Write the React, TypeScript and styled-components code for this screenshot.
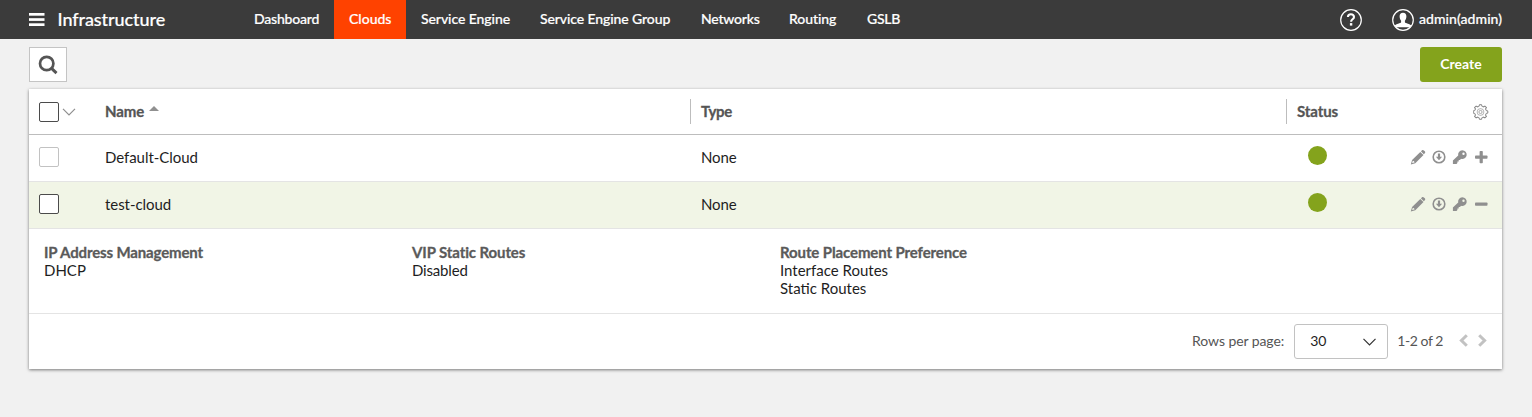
import React from "react";
import styled, { createGlobalStyle } from "styled-components";

const Global = createGlobalStyle`
  *, *::before, *::after { box-sizing: border-box; }
  html, body { margin: 0; background: #f1f1f1; }
  body { font-family: Lato, "Liberation Sans", sans-serif; font-size: 15px; color: #1e1e1e; overflow: hidden; }
  svg { display: block; flex: none; }
`;

const Page = styled.div`
  min-height: 417px;
  background: #f1f1f1;
`;

const TopBar = styled.header`
  display: flex;
  align-items: center;
  height: 39px;
  padding: 0 30px 0 29px;
  background: #3b3b3b;
  color: #fff;
  -webkit-text-stroke: 0.2px currentColor;
`;

const Text = styled.span<{ $track?: number }>`
  letter-spacing: ${(p) => p.$track ?? 0}px;
  white-space: nowrap;
`;

const RaisedText = styled(Text)`
  padding-bottom: 2px;
`;

const Brand = styled.div`
  display: flex;
  align-items: center;
  gap: 12.5px;
  width: 210px;
  font-size: 18px;
  font-weight: 500;
  line-height: 39px;
`;

const Nav = styled.nav`
  display: flex;
  flex: 1;
`;

const NavItem = styled.a<{ $width: number; $active?: boolean }>`
  width: ${(p) => p.$width}px;
  height: 39px;
  padding-left: 15px;
  font-size: 14px;
  font-weight: 500;
  line-height: 38px;
  background: ${(p) => (p.$active ? "#ff4200" : "transparent")};
`;

const UserArea = styled.div`
  display: flex;
  align-items: center;
  width: 162px;
  font-size: 14px;
  font-weight: 500;
  line-height: 37px;
`;

const UserButton = styled.div`
  display: flex;
  align-items: center;
  gap: 5px;
  margin-left: 30px;
`;

const Toolbar = styled.div`
  display: flex;
  justify-content: space-between;
  padding: 8px 30px 7px 29px;
`;

const SearchButton = styled.button`
  display: flex;
  align-items: center;
  justify-content: center;
  width: 38px;
  height: 35px;
  padding: 0;
  border: 1px solid #c4c4c4;
  background: #fff;
`;

const CreateButton = styled.button`
  width: 82px;
  height: 35px;
  padding: 0 0 1px;
  border: 0;
  border-radius: 3px;
  background: #84a31c;
  color: #fff;
  font: 700 14px/34px Lato, sans-serif;
`;

const Card = styled.main`
  width: 1473px;
  margin-left: 29px;
  background: #fff;
  box-shadow: 0 1px 3px rgba(0, 0, 0, 0.5);
`;

const Row = styled.div<{ $selected?: boolean; $head?: boolean }>`
  display: grid;
  grid-template-columns: 76px 585px 596px 1fr 100px;
  align-items: center;
  height: ${(p) => (p.$head ? 46 : 47)}px;
  border-bottom: 1px solid ${(p) => (p.$head ? "#bdbdbd" : "#e4e4e4")};
  background: ${(p) => (p.$selected ? "#f1f5e6" : "transparent")};
`;

const CheckCell = styled.div`
  display: flex;
  align-items: center;
  gap: 3px;
  padding-left: 10px;
`;

const Checkbox = styled.span<{ $muted?: boolean; $raise?: boolean }>`
  width: 20px;
  height: 20px;
  margin-bottom: ${(p) => (p.$raise ? 2 : 0)}px;
  border: 1px solid ${(p) => (p.$muted ? "#c2c2c2" : "#4b4b4b")};
  border-radius: 2px;
  background: #fff;
`;

const HeadCell = styled.div<{ $divided?: boolean }>`
  display: flex;
  align-items: center;
  gap: 5px;
  height: 25px;
  padding-left: ${(p) => (p.$divided ? 10 : 0)}px;
  border-left: ${(p) => (p.$divided ? "1px solid #bdbdbd" : "0")};
  color: #555;
  font-size: 15px;
  font-weight: 700;
  -webkit-text-stroke: 0.3px currentColor;
`;

const SortMark = styled.span`
  margin-bottom: 6px;
  border: 5px solid transparent;
  border-top: 0;
  border-bottom-color: #909090;
`;

const Cell = styled.div<{ $indent?: boolean }>`
  margin-bottom: 2px;
  padding-left: ${(p) => (p.$indent ? 11 : 0)}px;
  line-height: 20px;
`;

const Dot = styled.span`
  width: 19px;
  height: 19px;
  margin: 0 0 5px 22px;
  border-radius: 50%;
  background: #84a31c;
`;

const Actions = styled.div<{ $raise?: boolean }>`
  display: flex;
  align-items: center;
  justify-content: flex-end;
  gap: 5px;
  margin-bottom: ${(p) => (p.$raise ? 2 : 0)}px;
  padding-right: 13px;
  color: #8f8f8f;
`;

const Details = styled.section`
  display: grid;
  grid-template-columns: 368px 368px 1fr;
  height: 85px;
  padding: 14px 15px 0;
  border-bottom: 1px solid #e4e4e4;
  line-height: 18px;
`;

const Detail = styled.div`
  display: flex;
  flex-direction: column;
`;

const DetailTitle = styled.strong<{ $track?: number }>`
  color: #5a5a5a;
  letter-spacing: ${(p) => p.$track ?? 0}px;
  -webkit-text-stroke: 0.3px currentColor;
`;

const Footer = styled.footer`
  display: flex;
  align-items: center;
  justify-content: flex-end;
  height: 55px;
  padding-right: 14px;
  color: #555;
  font-size: 14px;
`;

const PageSize = styled.div`
  display: flex;
  align-items: center;
  justify-content: space-between;
  width: 94px;
  height: 35px;
  margin: 0 9px 0 10px;
  padding: 0 11px 0 15px;
  border: 1px solid #c2c2c2;
  border-radius: 3px;
  color: #1e1e1e;
`;

const Pager = styled.div`
  display: flex;
  gap: 10px;
  width: 45px;
  padding: 0 0 2px 15.5px;
`;

const MenuIcon = () => (
  <svg width="16" height="13" viewBox="0 0 16 13" fill="#fff">
    <rect x="0" y="0" width="15.5" height="2.7" />
    <rect x="0" y="5.2" width="15.5" height="2.7" />
    <rect x="0" y="10.3" width="15.5" height="2.7" />
  </svg>
);

const HelpIcon = () => (
  <svg width="22" height="22" viewBox="0 0 22 22" fill="none" stroke="#fff">
    <circle cx="11" cy="11" r="10.3" strokeWidth="1.2" />
    <path d="M7.900 8C8 6.200 9.200 5.300 10.900 5.300c1.900 0 3.100 1 3.100 2.600 0 2.400-2.900 2.300-2.900 4.800" strokeWidth="2.100" />
    <path d="M11.100 14.100v2.500" strokeWidth="2.400" />
  </svg>
);

const UserIcon = () => (
  <svg width="22" height="22" viewBox="0 0 22 22">
    <circle cx="11" cy="11" r="10.3" fill="none" stroke="#fff" strokeWidth="1.2" />
    <path
      fill="#fff"
      d="M11 3.700c2.200 0 3.500 1.500 3.400 3.900-.1 1.800-.6 3.200-1.500 4.200v1.500c.5 1.100 5.300 1.500 6.300 3.300l-1 1.700H3.800l-1-1.700c1-1.800 5.800-2.200 6.300-3.300v-1.500c-.9-1-1.400-2.400-1.500-4.200C7.500 5.200 8.800 3.700 11 3.700z"
    />
  </svg>
);

const SearchIcon = () => (
  <svg width="20" height="20" viewBox="0 0 20 20" fill="none" stroke="#555">
    <circle cx="8.700" cy="8.500" r="6.700" strokeWidth="2.700" />
    <path d="M13.300 13.200l5.200 4.900" strokeWidth="3" />
  </svg>
);

const ThinChevron = ({ color, width }: { color: string; width: number }) => (
  <svg width={width} height="8" viewBox="0 0 13 8" fill="none" stroke={color} strokeWidth="1.2">
    <path d="M.5.8l6 6 6-6" />
  </svg>
);

const teeth = Array.from({ length: 8 }, (_, i) => i * 45);

const GearIcon = () => (
  <svg width="16" height="16" viewBox="-7.500 -8 16 16" fill="none" stroke="#858585" strokeWidth="1">
    {teeth.map((angle) => (
      <path key={angle} transform={`rotate(${angle})`} d="M-2.300-5.500L-1.400-5.700-1.100-7.300H1.100L1.400-5.700 2.300-5.500" />
    ))}
    <circle r="3.400" strokeWidth=".6" />
    <circle r="1.600" strokeWidth=".7" />
  </svg>
);

const PencilIcon = () => (
  <svg width="16" height="16" viewBox="0 0 16 16" fill="currentColor">
    <path fillRule="evenodd" d="M10.900 2.300l.9-.9c.8-.7 1.500-.6 2.100 0l.9.9c.6.7.6 1.400 0 2l-1 1zM10.300 2.900l3.200 3.200-8.200 8.200L.8 15.400l1.300-4.500zM2.800 11.800l-.7 2.300 2.400-.7c0-.8-.9-1.500-1.700-1.600z" />
  </svg>
);

const DownloadIcon = () => (
  <svg width="16" height="16" viewBox="0 0 16 16">
    <circle cx="8" cy="8" r="5.800" fill="none" stroke="currentColor" strokeWidth="1.600" />
    <path fill="currentColor" d="M6.900 4.500h2.200v3.200h2L8 11.300 4.900 7.700h2z" />
  </svg>
);

const KeyIcon = () => (
  <svg width="16" height="16" viewBox="0 0 16 16" fill="currentColor">
    <path
      fillRule="evenodd"
      d="M10.300 1.200a4.400 4.400 0 1 1-1.300 8.600l-1 1.200H6.700v1.500H5.400v1.400l-.9 1H.9v-3.400l5.300-4.900a4.400 4.400 0 0 1 4.100-5.400zM11.500 3.500a1.200 1.200 0 1 0 0 2.400 1.200 1.200 0 0 0 0-2.400z"
    />
  </svg>
);

const ToggleIcon = ({ open }: { open?: boolean }) => (
  <svg width="16" height="16" viewBox="0 0 16 16" fill="currentColor">
    <rect x="2" y="6.500" width="12.500" height="3.200" rx=".8" />
    {!open && <rect x="6.600" y="2" width="3.200" height="12.200" rx=".8" />}
  </svg>
);

const PagerArrow = ({ flip }: { flip?: boolean }) => (
  <svg width="9" height="13" viewBox="0 0 9 13" fill="none" stroke="#c2c2c2" strokeWidth="3">
    <path d={flip ? "M1.200 1.200l5.400 5.300-5.400 5.300" : "M7.800 1.200L2.400 6.500l5.400 5.300"} />
  </svg>
);

const navItems = [
  { label: "Dashboard", width: 95, track: -0.2 },
  { label: "Clouds", width: 72, track: 0, active: true },
  { label: "Service Engine", width: 119, track: -0.07 },
  { label: "Service Engine Group", width: 161, track: -0.1 },
  { label: "Networks", width: 88, track: -0.22 },
  { label: "Routing", width: 78, track: -0.08 },
  { label: "GSLB", width: 63, track: -0.3 },
];

const clouds = [
  { name: "Default-Cloud", type: "None", open: false },
  { name: "test-cloud", type: "None", open: true },
];

const details = [
  { title: "IP Address Management", values: ["DHCP"], track: -0.14 },
  { title: "VIP Static Routes", values: ["Disabled"], track: -0.1 },
  { title: "Route Placement Preference", values: ["Interface Routes", "Static Routes"], track: -0.11 },
];

export default function App() {
  return (
    <Page>
      <Global />
      <TopBar>
        <Brand>
          <MenuIcon />
          <Text $track={-0.07}>Infrastructure</Text>
        </Brand>
        <Nav>
          {navItems.map((item) => (
            <NavItem key={item.label} $width={item.width} $active={item.active}>
              <Text $track={item.track}>{item.label}</Text>
            </NavItem>
          ))}
        </Nav>
        <UserArea>
          <HelpIcon />
          <UserButton>
            <UserIcon />
            <RaisedText $track={0.06}>admin(admin)</RaisedText>
          </UserButton>
        </UserArea>
      </TopBar>
      <Toolbar>
        <SearchButton aria-label="Search">
          <SearchIcon />
        </SearchButton>
        <CreateButton>Create</CreateButton>
      </Toolbar>
      <Card>
        <Row $head>
          <CheckCell>
            <Checkbox />
            <ThinChevron color="#8f8f8f" width={14} />
          </CheckCell>
          <HeadCell>
            <RaisedText $track={-0.1}>Name</RaisedText>
            <SortMark />
          </HeadCell>
          <HeadCell $divided>
            <RaisedText $track={-0.3}>Type</RaisedText>
          </HeadCell>
          <HeadCell $divided>
            <RaisedText $track={-0.1}>Status</RaisedText>
          </HeadCell>
          <Actions>
            <GearIcon />
          </Actions>
        </Row>
        {clouds.map((cloud) => (
          <Row key={cloud.name} $selected={cloud.open}>
            <CheckCell>
              <Checkbox $muted={!cloud.open} $raise />
            </CheckCell>
            <Cell>
              <Text $track={-0.05}>{cloud.name}</Text>
            </Cell>
            <Cell $indent>
              <Text $track={-0.15}>{cloud.type}</Text>
            </Cell>
            <Dot />
            <Actions $raise>
              <PencilIcon />
              <DownloadIcon />
              <KeyIcon />
              <ToggleIcon open={cloud.open} />
            </Actions>
          </Row>
        ))}
        <Details>
          {details.map((detail) => (
            <Detail key={detail.title}>
              <DetailTitle $track={detail.track}>{detail.title}</DetailTitle>
              {detail.values.map((value) => (
                <Text key={value} $track={value === "Disabled" ? -0.18 : 0}>
                  {value}
                </Text>
              ))}
            </Detail>
          ))}
        </Details>
        <Footer>
          <RaisedText $track={-0.08}>Rows per page:</RaisedText>
          <PageSize>
            <RaisedText>30</RaisedText>
            <ThinChevron color="#333" width={13} />
          </PageSize>
          <RaisedText $track={-0.42}>1-2 of 2</RaisedText>
          <Pager>
            <PagerArrow />
            <PagerArrow flip />
          </Pager>
        </Footer>
      </Card>
    </Page>
  );
}
